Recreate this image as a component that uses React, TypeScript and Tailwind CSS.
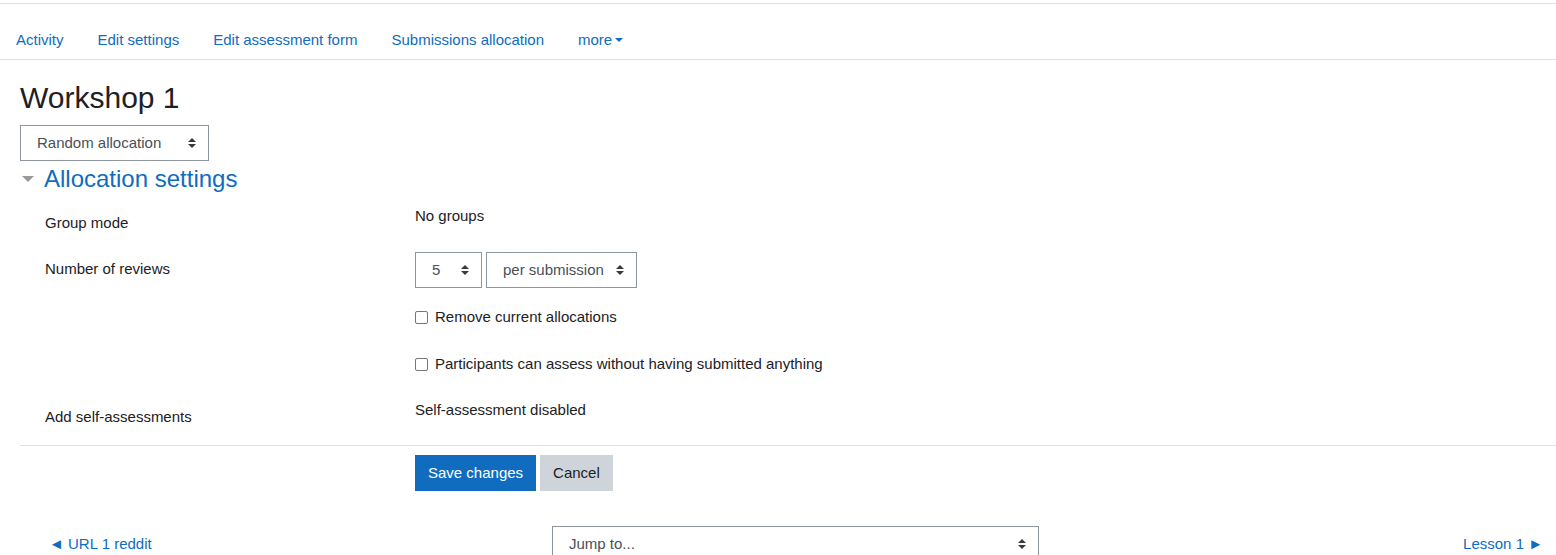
import React from 'react';

const Arrows = () => (
  <svg width="8" height="10" viewBox="0 0 8 10" className="shrink-0">
    <path d="M0 4 L4 0 L8 4 Z" fill="#343a40" />
    <path d="M0 6 L4 10 L8 6 Z" fill="#343a40" />
  </svg>
);

const Select = ({ label, className }: { label: string; className: string }) => (
  <div className={`h-9 border border-[#8f959e] bg-white flex items-center justify-between pl-4 pr-3 text-[#495057] ${className}`}>
    <span>{label}</span>
    <Arrows />
  </div>
);

const Check = ({ label }: { label: string }) => (
  <div className="flex items-center gap-[7px]">
    <span className="w-[13px] h-[13px] border border-[#767676] rounded-[2px] bg-white" />
    <span>{label}</span>
  </div>
);

const tabs = ['Activity', 'Edit settings', 'Edit assessment form', 'Submissions allocation'];

export default function App() {
  return (
    <div className="h-[555px] overflow-hidden bg-white text-[#1d2125] font-['Liberation_Sans',Arial,sans-serif] text-[15px] leading-[1.5]">
      <div className="h-[3px]" />
      <nav className="border-y border-[#dee2e6] h-[57px] flex items-end pb-2 pl-4 gap-[34px] text-[#0f6cbf]">
        {tabs.map((t) => (
          <a key={t} href="#" className="whitespace-nowrap">{t}</a>
        ))}
        <a href="#" className="flex items-center gap-[3px]">
          more
          <span className="w-0 h-0 border-x-[4px] border-x-transparent border-t-[4px] border-t-[#0f6cbf]" />
        </a>
      </nav>

      <div className="pl-5">
        <h2 className="mt-5 text-[30px] leading-[36px]">Workshop 1</h2>
        <Select label="Random allocation" className="mt-[9px] w-[189px]" />

        <div className="mt-[3px] flex items-center gap-[10px] pl-[2px]">
          <span className="w-0 h-0 border-x-[6px] border-x-transparent border-t-[6px] border-t-[#999]" />
          <h3 className="text-[24px] leading-[29px] text-[#0f6cbf]">Allocation settings</h3>
        </div>

        <div className="pl-[25px]">
          <div className="mt-[12px] h-[47px] flex">
            <div className="w-[370px] pt-[7px]">Group mode</div>
            <div>No groups</div>
          </div>

          <div className="flex">
            <div className="w-[370px] pt-[6px]">Number of reviews</div>
            <div>
              <div className="flex gap-[4px]">
                <Select label="5" className="w-[67px]" />
                <Select label="per submission" className="w-[151px]" />
              </div>
              <div className="h-[48px] pt-[18px]">
                <Check label="Remove current allocations" />
              </div>
              <div className="h-[48px] pt-[17px]">
                <Check label="Participants can assess without having submitted anything" />
              </div>
            </div>
          </div>

          <div className="flex h-[61px]">
            <div className="w-[370px] pt-[22px]">Add self-assessments</div>
            <div className="pt-[15px]">Self-assessment disabled</div>
          </div>
        </div>

        <div className="border-t border-[#dee2e6]" />

        <div className="pl-[395px] mt-[9px] flex gap-[4px]">
          <button className="h-9 px-3 border border-[#0f6cbf] bg-[#0f6cbf] text-white">Save changes</button>
          <button className="h-9 px-3 border border-[#ced4da] bg-[#ced4da] text-[#1d2125]">Cancel</button>
        </div>

        <div className="mt-[35px] flex items-center">
          <div className="w-[532px] pl-[29px]">
            <a href="#" className="text-[#0f6cbf]">◄ URL 1 reddit</a>
          </div>
          <Select label="Jump to..." className="w-[487px]" />
          <div className="flex-1 text-right pr-[13px]">
            <a href="#" className="text-[#0f6cbf]">Lesson 1 ►</a>
          </div>
        </div>
      </div>
    </div>
  );
}
